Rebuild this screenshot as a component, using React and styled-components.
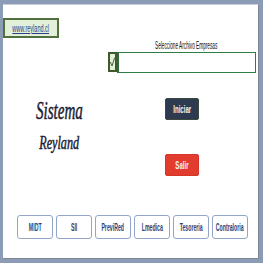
import React from 'react';
import styled, { createGlobalStyle } from 'styled-components';

const Global = createGlobalStyle`
  html, body { margin: 0; padding: 0; }
  body {
    background: #8d9cb6;
    font-family: "Liberation Sans", Arial, sans-serif;
  }
`;

const Frame = styled.div`
  width: 263px;
  height: 263px;
  box-sizing: border-box;
  padding: 4px 4px 4px 3px;
`;

const Panel = styled.div`
  height: 255px;
  background: #ffffff;
  border-top: 1px solid #c8ced8;
  border-right: 1px solid #7d8593;
  border-bottom: 1px solid #7d8593;
  box-sizing: border-box;
  display: flex;
  flex-direction: column;
`;

const Narrow = styled.span`
  display: inline-block;
  white-space: nowrap;
  transform: scaleX(${(p) => p.$sx || 0.6});
  transform-origin: center;
`;

const Header = styled.div`
  padding-top: 13px;
  height: 21px;
`;

const LinkBox = styled.a`
  display: flex;
  align-items: center;
  justify-content: center;
  width: 56px;
  height: 20px;
  box-sizing: border-box;
  background: #e2efd9;
  border: 2px solid #52703d;
  color: #2a3f8a;
  font-size: 11px;
  text-decoration: underline;
`;

const FileArea = styled.div`
  margin-left: 105px;
  width: 148px;
  display: flex;
  flex-direction: column;
`;

const FileLabel = styled.div`
  height: 13px;
  padding-left: 9px;
  display: flex;
  align-items: center;
  justify-content: center;
  font-size: 10px;
  color: #111;
`;

const FileRow = styled.div`
  display: flex;
  height: 21px;
`;

const Check = styled.div`
  width: 9px;
  height: 20px;
  box-sizing: border-box;
  border: 2px solid #3d5a2a;
  background: #e2efd9;
  display: flex;
  align-items: center;
  justify-content: center;
`;

const FileInput = styled.div`
  flex: 1;
  height: 21px;
  box-sizing: border-box;
  border: 1px solid #2e7d44;
  border-left: 2px solid #2e6a3a;
  background: #fff;
`;

const Middle = styled.div`
  display: grid;
  grid-template-columns: 112px 1fr;
  margin-top: 25px;
`;

const Titles = styled.div`
  display: flex;
  flex-direction: column;
  align-items: center;
`;

const Title = styled.div`
  font-family: "Liberation Serif", "Times New Roman", serif;
  font-style: italic;
  color: #1a2033;
  -webkit-text-stroke: 0.5px #1a2033;
  font-size: ${(p) => p.$size}px;
  line-height: ${(p) => p.$lh}px;
  margin-top: ${(p) => p.$mt || 0}px;
`;

const Actions = styled.div`
  display: flex;
  flex-direction: column;
  align-items: center;
  padding-right: 9px;
  gap: 34px;
`;

const ActionButton = styled.button`
  width: 34px;
  height: 22px;
  padding: 0;
  border-radius: 2px;
  border: 1px solid ${(p) => (p.$red ? '#d4362a' : '#3b4a3a')};
  background: ${(p) => (p.$red ? '#e23c2e' : '#2e3a50')};
  color: #f4f4f4;
  font-family: "Liberation Sans", Arial, sans-serif;
  font-weight: bold;
  font-size: 11px;
  display: flex;
  align-items: center;
  justify-content: center;
`;

const Links = styled.div`
  display: grid;
  grid-template-columns: repeat(6, 36px);
  gap: 3px;
  margin-top: auto;
  margin-bottom: 19px;
  margin-left: 14px;
`;

const LinkButton = styled.button`
  height: 24px;
  padding: 0;
  background: #fff;
  border: 1px solid #93a6c9;
  border-radius: 3px;
  color: #2c4374;
  font-family: "Liberation Sans", Arial, sans-serif;
  font-weight: bold;
  font-size: 10px;
  display: flex;
  align-items: center;
  justify-content: center;
  overflow: visible;
`;

const links = ['MIDT', 'SII', 'PreviRed', 'Lmedica', 'Tesoreria', 'Contraloria'];

export default function App() {
  return (
    <>
      <Global />
      <Frame>
        <Panel>
          <Header>
            <LinkBox href="#">
              <Narrow $sx={0.5}>www.reyland.cl</Narrow>
            </LinkBox>
          </Header>
          <FileArea>
            <FileLabel>
              <Narrow $sx={0.47}>Seleccione Archivo Empresas</Narrow>
            </FileLabel>
            <FileRow>
              <Check>
                <svg width="7" height="14" viewBox="0 0 7 14">
                  <polyline points="0.5,7 2.8,12.5 6.5,1" fill="none" stroke="#2f4a1f" strokeWidth="1.2" />
                </svg>
              </Check>
              <FileInput />
            </FileRow>
          </FileArea>
          <Middle>
            <Titles>
              <Title $size={26} $lh={26}>
                <Narrow $sx={0.58}>Sistema</Narrow>
              </Title>
              <Title $size={19} $lh={20} $mt={9}>
                <Narrow $sx={0.64}>Reyland</Narrow>
              </Title>
            </Titles>
            <Actions>
              <ActionButton>
                <Narrow $sx={0.55}>Iniciar</Narrow>
              </ActionButton>
              <ActionButton $red>
                <Narrow $sx={0.55}>Salir</Narrow>
              </ActionButton>
            </Actions>
          </Middle>
          <Links>
            {links.map((l) => (
              <LinkButton key={l}>
                <Narrow $sx={0.52}>{l}</Narrow>
              </LinkButton>
            ))}
          </Links>
        </Panel>
      </Frame>
    </>
  );
}
